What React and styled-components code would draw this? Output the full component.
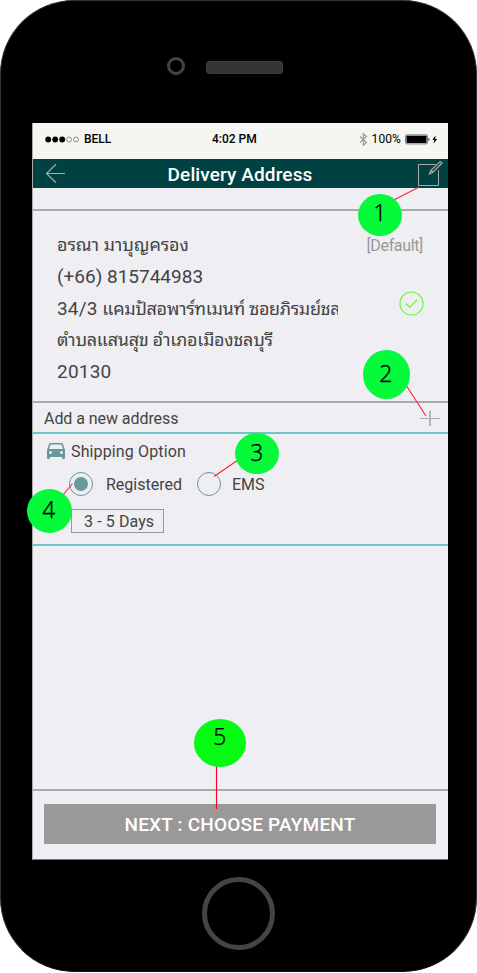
import React from "react";
import styled, { createGlobalStyle } from "styled-components";

const GlobalStyle = createGlobalStyle`
  * { box-sizing: border-box; }
  body { margin: 0; background: #fff; font-family: Roboto, "Noto Sans Thai Looped", "Noto Sans", sans-serif; }
`;

const Phone = styled.main`
  position: relative;
  width: 477px;
  height: 972px;
  background: #000;
  border: 1px solid #333;
  border-bottom-color: #111;
  border-radius: 74px;
  display: flex;
  flex-direction: column;
  padding: 0 28px 0 31px;
`;
const Earpiece = styled.div`
  height: 122px;
  flex: none;
  display: flex;
  align-items: flex-start;
  gap: 21px;
  padding: 56px 0 0 135px;
`;
const Camera = styled.div`
  width: 18px;
  height: 18px;
  border: 3px solid #444;
  border-radius: 50%;
`;
const Speaker = styled.div`
  width: 77px;
  height: 13px;
  margin-top: 4px;
  border-radius: 3px;
  background: #353535;
  border: 1px solid #3d3d3d;
`;
const Screen = styled.section`
  width: 416px;
  height: 737px;
  flex: none;
  display: flex;
  flex-direction: column;
  background: #eeeef3;
  border-left: 1px solid #aaa;
  border-bottom: 1px solid #777;
  color: #444;
`;
const Home = styled.div`
  width: 73px;
  height: 73px;
  flex: none;
  margin: 17px 0 0 170px;
  border: 5px solid #444;
  border-radius: 50%;
`;

const StatusBar = styled.div`
  height: 36px;
  flex: none;
  display: grid;
  grid-template-columns: 155px 1fr auto;
  column-gap: 12px;
  align-items: center;
  padding: 0 9px 4px 12px;
  background: #f5f5f1;
  color: #000;
  font-size: 12px;
  font-weight: 500;
`;
const StatusGroup = styled.div`
  display: flex;
  align-items: center;
  gap: ${(p) => p.$gap}px;
`;
const Percent = styled.span`
  font-weight: 400;
  letter-spacing: 0.1px;
`;
const Icon = styled.svg`
  display: block;
  flex: none;
  fill: none;
`;

const Header = styled.header`
  height: 29px;
  flex: none;
  display: flex;
  align-items: center;
  justify-content: space-between;
  padding: 0 5px 0 12px;
  background: #004242;
`;
const Title = styled.h1`
  margin: 2px 4px 0 0;
  color: #fff;
  font-size: 19px;
  line-height: 24px;
  font-weight: 500;
  letter-spacing: 0.12px;
`;

const Address = styled.section`
  height: 194px;
  flex: none;
  margin-top: 21px;
  border-top: 2px solid #aaa;
  border-bottom: 2px solid #aaa;
  display: grid;
  grid-template-columns: 281px 1fr;
  column-gap: 23px;
  padding: 18px 24px 0 24px;
`;
const AddressLines = styled.div`
  overflow: hidden;
  height: 165px;
`;
const Line = styled.div`
  height: 31.8px;
  line-height: 32px;
  white-space: nowrap;
  font-size: 19px;
  letter-spacing: ${(p) => p.$spacing || 0}px;
`;
const Thai = styled.span`
  font-size: 18px;
  font-weight: 400;
  letter-spacing: ${(p) => p.$spacing || 0}px;
`;
const AddressState = styled.div`
  display: flex;
  flex-direction: column;
  align-items: flex-end;
  gap: 35px;
`;
const Default = styled.span`
  margin: 8px 1px 0 0;
  color: #999;
  font-size: 16px;
  line-height: 18px;
  letter-spacing: -0.35px;
`;

const AddRow = styled.div`
  height: 31px;
  flex: none;
  display: flex;
  align-items: center;
  justify-content: space-between;
  border-bottom: 2px solid #6cc8c8;
  padding: 2px 8px 0 11px;
  font-size: 16px;
  letter-spacing: -0.06px;
`;
const Shipping = styled.section`
  height: 112px;
  flex: none;
  border-bottom: 2px solid #6cc8c8;
  padding: 6px 0 0 14px;
  font-size: 16px;
`;
const ShippingTitle = styled.div`
  display: flex;
  align-items: center;
  gap: 6px;
  height: 22px;
  letter-spacing: 0.13px;
`;
const Options = styled.div`
  display: flex;
  align-items: center;
  height: 24px;
  margin: 10px 0 0 22px;
`;
const Radio = styled.span`
  width: 24px;
  height: 24px;
  display: grid;
  place-items: center;
  border: 1px solid #669999;
  border-radius: 50%;
  &::after {
    content: "";
    width: 14px;
    height: 14px;
    border-radius: 50%;
    background: ${(p) => (p.$checked ? "#669999" : "transparent")};
  }
`;
const OptionLabel = styled.span`
  margin: 0 ${(p) => p.$right || 0}px 0 ${(p) => p.$left}px;
`;
const Days = styled.div`
  width: 93px;
  height: 24px;
  margin: 13px 0 0 24px;
  border: 1px solid #999;
  padding-left: 12px;
  line-height: 24px;
  white-space: nowrap;
  letter-spacing: 0.1px;
`;
const Footer = styled.footer`
  margin-top: auto;
  height: 70px;
  border-top: 2px solid #aaa;
  padding: 13px 12px 0 11px;
`;
const NextButton = styled.button`
  display: block;
  width: 392px;
  height: 40px;
  border: 0;
  border-radius: 0;
  padding: 1px 0 0;
  background: #999;
  color: #fff;
  font: 500 19px/39px Roboto, sans-serif;
  letter-spacing: 0.2px;
`;

const Callouts = styled.svg`
  position: absolute;
  left: -1px;
  top: -1px;
  fill: none;
  stroke: #ff203a;
  stroke-width: 1.1;
  pointer-events: none;
`;
const Marker = styled.div`
  position: absolute;
  left: ${(p) => p.$x - 1}px;
  top: ${(p) => p.$y - 1}px;
  width: ${(p) => p.$w}px;
  height: ${(p) => p.$h}px;
  padding: 0 1px ${(p) => p.$lift}px 0;
  display: grid;
  place-items: center;
  border-radius: 50%;
  background: ${(p) => p.$color || "#05fa3c"};
  color: #000;
  font-family: "Noto Sans", sans-serif;
  font-size: 24px;
  font-weight: 300;
  line-height: 1;
`;
const Digit = styled.span`
  transform: scaleX(0.95);
  -webkit-text-stroke: 0.25px #000;
`;

const markers = [
  { n: 1, x: 358, y: 194, w: 44, h: 42, lift: 7 },
  { n: 2, x: 363, y: 350, w: 47, h: 49, lift: 3 },
  { n: 3, x: 235, y: 433, w: 44, h: 41, lift: 3 },
  { n: 4, x: 27, y: 489, w: 45, h: 44, lift: 5 },
  { n: 5, x: 194, y: 719, w: 52, h: 48, lift: 14, color: "#05fa14" },
];

export default function App() {
  return (
    <>
      <GlobalStyle />
      <Phone>
        <Earpiece>
          <Camera />
          <Speaker />
        </Earpiece>
        <Screen>
          <StatusBar>
            <StatusGroup $gap={5}>
              <Icon width="34" height="7" viewBox="0 0 34 7">
                <g fill="#000">
                  <circle cx="3.2" cy="3.5" r="2.9" />
                  <circle cx="10.2" cy="3.5" r="2.9" />
                  <circle cx="17.2" cy="3.5" r="2.9" />
                </g>
                <g stroke="#777" strokeWidth=".8">
                  <circle cx="24.1" cy="3.5" r="2.5" />
                  <circle cx="31" cy="3.5" r="2.5" />
                </g>
              </Icon>
              <span>BELL</span>
            </StatusGroup>
            <span>4:02 PM</span>
            <StatusGroup $gap={4}>
              <Icon width="9" height="13" viewBox="0 0 9 13" stroke="#999" strokeWidth="1.2">
                <path d="m1 3.5 6.5 6-3.2 2.7V.8l3.2 2.7L1 9.5" />
              </Icon>
              <Percent>100%</Percent>
              <Icon width="34" height="11" viewBox="0 0 34 11">
                <rect x=".5" y=".9" width="22" height="9" rx="1.5" stroke="#777" />
                <rect x="1.5" y="1.8" width="20" height="7.2" rx=".5" fill="#000" />
                <path d="M23.5 4q2 1.4 0 3z" fill="#000" />
                <path d="m30.5 1.5-3.2 4.3h2l-.8 3.7 3.7-4.6h-2z" fill="#000" />
              </Icon>
            </StatusGroup>
          </StatusBar>
          <Header>
            <Icon width="21" height="21" viewBox="0 0 21 21" stroke="#aaa" strokeWidth="1.2">
              <path d="M20 10.5H1.5M11 1.3 1.5 10.5l9.5 9.2" />
            </Icon>
            <Title>Delivery Address</Title>
            <Icon width="25" height="25" viewBox="0 0 25 25" stroke="#aaa">
              <path d="M17.5 3.5H.5v21h20V9" />
              <path d="m11.5 13 1.4-3.6L22 .9q1.5-.4 2 1.1l-9.1 9.2zM13 9.3l2 1.9" strokeWidth="1.2" />
            </Icon>
          </Header>
          <Address>
            <AddressLines>
              <Line><Thai $spacing={-0.1}>อรณา มาบุญครอง</Thai></Line>
              <Line>(+66) 815744983</Line>
              <Line $spacing={0.15}>34/3 <Thai $spacing={-0.36}>แคมปัสอพาร์ทเมนท์ ซอยภิรมย์ชล</Thai></Line>
              <Line><Thai $spacing={-0.29}>ตำบลแสนสุข อำเภอเมืองชลบุรี</Thai></Line>
              <Line $spacing={0.2}>20130</Line>
            </AddressLines>
            <AddressState>
              <Default>[Default]</Default>
              <Icon width="25" height="26" viewBox="1 0 25 26" stroke="#6df43a" strokeWidth="1.2">
                <circle cx="13.5" cy="13.5" r="11.5" />
                <path d="m8 13.5 3.8 4 7.2-7.7" />
              </Icon>
            </AddressState>
          </Address>
          <AddRow>
            Add a new address
            <Icon width="20" height="16" viewBox="0 0 20 16">
              <path d="M0 7.5h20" stroke="#aaa" />
              <path d="M10 0v15" stroke="#b5b5b8" strokeWidth="2" />
            </Icon>
          </AddRow>
          <Shipping>
            <ShippingTitle>
              <Icon width="18" height="16" viewBox="3 5 18 16">
                <path fill="#669999" d="M18.92 6.01C18.72 5.42 18.16 5 17.5 5h-11c-.66 0-1.21.42-1.42 1.01L3 12v8c0 .55.45 1 1 1h1c.55 0 1-.45 1-1v-1h12v1c0 .55.45 1 1 1h1c.55 0 1-.45 1-1v-8zM6.5 16a1.5 1.5 0 1 1 0-3 1.5 1.5 0 0 1 0 3m11 0a1.5 1.5 0 1 1 0-3 1.5 1.5 0 0 1 0 3M5 11l1.5-4.5h11L19 11z" />
              </Icon>
              Shipping Option
            </ShippingTitle>
            <Options>
              <Radio $checked />
              <OptionLabel $left={13} $right={15}>Registered</OptionLabel>
              <Radio />
              <OptionLabel $left={11}>EMS</OptionLabel>
            </Options>
            <Days>3 - 5 Days</Days>
          </Shipping>
          <Footer>
            <NextButton>NEXT : CHOOSE PAYMENT</NextButton>
          </Footer>
        </Screen>
        <Home />
        <Callouts width="477" height="972" viewBox="0 0 477 972">
          <path d="M394 200l25-13M406 385l20 31M238 460l-24 16.500M63 495l9.500-11.500" />
          <path d="M216.500 766v43" stroke="#ff0028" />
        </Callouts>
        {markers.map((m) => (
          <Marker key={m.n} $x={m.x} $y={m.y} $w={m.w} $h={m.h} $lift={m.lift} $color={m.color}>
            <Digit>{m.n}</Digit>
          </Marker>
        ))}
      </Phone>
    </>
  );
}
